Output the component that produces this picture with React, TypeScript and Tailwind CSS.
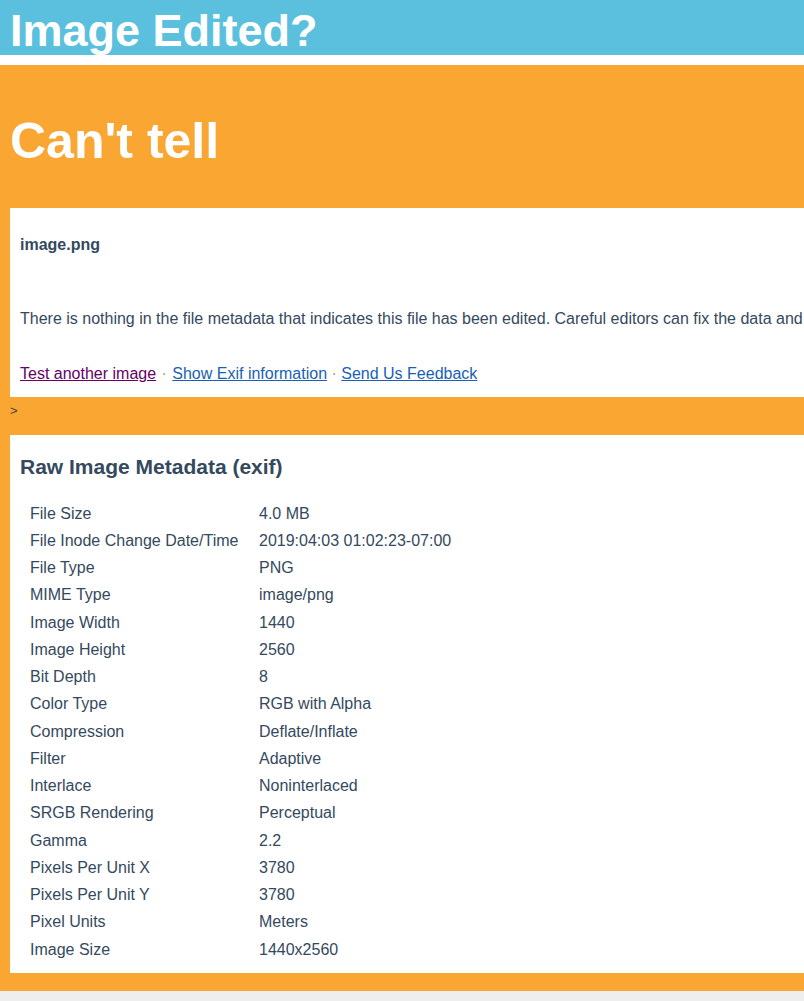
import React from "react";

const rows: [string, string][] = [
  ["File Size", "4.0 MB"],
  ["File Inode Change Date/Time", "2019:04:03 01:02:23-07:00"],
  ["File Type", "PNG"],
  ["MIME Type", "image/png"],
  ["Image Width", "1440"],
  ["Image Height", "2560"],
  ["Bit Depth", "8"],
  ["Color Type", "RGB with Alpha"],
  ["Compression", "Deflate/Inflate"],
  ["Filter", "Adaptive"],
  ["Interlace", "Noninterlaced"],
  ["SRGB Rendering", "Perceptual"],
  ["Gamma", "2.2"],
  ["Pixels Per Unit X", "3780"],
  ["Pixels Per Unit Y", "3780"],
  ["Pixel Units", "Meters"],
  ["Image Size", "1440x2560"],
];

export default function App() {
  return (
    <div
      className="w-[804px] h-[1001px] overflow-hidden bg-[#eeeeee] text-[#34495e]"
      style={{ fontFamily: '"Liberation Sans", Arial, sans-serif' }}
    >
      <div className="w-[1400px]">
        <div className="bg-[#5bc0de] h-[55px] pl-[10px]">
          <h1 className="text-white font-bold text-[45px] leading-[62px]">Image Edited?</h1>
        </div>
        <div className="h-[10px] bg-white" />
        <div className="bg-[#f9a633] pl-[10px] pb-[18px]">
          <div className="h-[143px] flex items-center">
            <h2 className="text-white font-bold text-[50px] leading-[56px] pt-[8px]">Can't tell</h2>
          </div>
          <div className="bg-white h-[189px] pl-[10px] pt-[27px]">
            <div className="font-bold text-[16px] leading-[20px]">image.png</div>
            <p className="mt-[53px] text-[16px] leading-[22px] whitespace-nowrap">
              There is nothing in the file metadata that indicates this file has been edited. Careful editors can fix the data and make it look like it has never been touched.
            </p>
            <div className="mt-[33px] text-[16px] leading-[22px] whitespace-nowrap">
              <a href="#" className="text-[#660066] underline">Test another image</a>
              <span className="text-[#999999] px-[1px]"> · </span>
              <a href="#" className="text-[#1a5fb4] underline">Show Exif information</a>
              <span className="text-[#999999]"> · </span>
              <a href="#" className="text-[#1a5fb4] underline">Send Us Feedback</a>
            </div>
          </div>
          <div className="h-[38px] text-[13px] leading-[28px] text-[#444444]">&gt;</div>
          <div className="bg-white h-[538px] pl-[10px] pt-[20px]">
            <h3 className="font-bold text-[21px] leading-[24px]">Raw Image Metadata (exif)</h3>
            <div className="mt-[21px] pl-[10px]">
              {rows.map(([k, v]) => (
                <div key={k} className="flex h-[27.25px] items-center text-[16px] text-[#34495e]">
                  <div className="w-[229px]">{k}</div>
                  <div>{v}</div>
                </div>
              ))}
            </div>
          </div>
        </div>
      </div>
    </div>
  );
}
